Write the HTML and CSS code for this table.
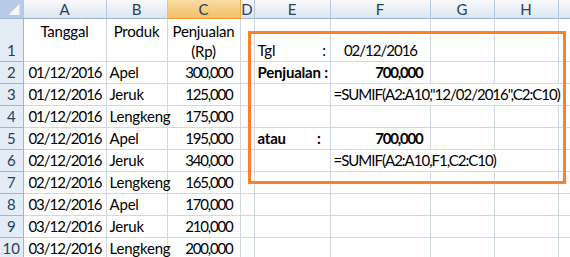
FILE: index.html
```html
<!DOCTYPE html>
<html lang="id">
<head>
    <meta charset="UTF-8">
    <meta name="viewport" content="width=device-width, initial-scale=1.0">
    <title>SUMIF per tanggal</title>
    <link rel="stylesheet" href="styles.css">
</head>
<body>
    <div class="sheet">
        <table class="grid">
            <colgroup>
                <col class="c-rowhead">
                <col class="c-a">
                <col class="c-b">
                <col class="c-c">
                <col class="c-d">
                <col class="c-e">
                <col class="c-f">
                <col class="c-g">
                <col class="c-h">
                <col class="c-i">
            </colgroup>
            <thead>
                <tr>
                    <th class="corner"><span class="corner-mark"></span></th>
                    <th>A</th>
                    <th>B</th>
                    <th class="selected">C</th>
                    <th>D</th>
                    <th>E</th>
                    <th>F</th>
                    <th>G</th>
                    <th>H</th>
                    <th></th>
                </tr>
            </thead>
            <tbody>
                <tr class="tall">
                    <th>1</th>
                    <td class="title">Tanggal</td>
                    <td class="title">Produk</td>
                    <td class="title">Penjualan<br>(Rp)</td>
                    <td></td>
                    <td><span class="label">Tgl</span><span class="colon tgl">:</span></td>
                    <td class="mid">02/12/2016</td>
                    <td></td>
                    <td></td>
                    <td></td>
                </tr>
                <tr>
                    <th>2</th>
                    <td class="mid">01/12/2016</td>
                    <td>Apel</td>
                    <td class="num">300,000</td>
                    <td></td>
                    <td class="bold">Penjualan :</td>
                    <td class="num bold">700,000</td>
                    <td></td>
                    <td></td>
                    <td></td>
                </tr>
                <tr>
                    <th>3</th>
                    <td class="mid">01/12/2016</td>
                    <td>Jeruk</td>
                    <td class="num">125,000</td>
                    <td></td>
                    <td></td>
                    <td class="formula" colspan="4">=SUMIF(A2:A10,"12/02/2016",C2:C10)</td>
                </tr>
                <tr>
                    <th>4</th>
                    <td class="mid">01/12/2016</td>
                    <td>Lengkeng</td>
                    <td class="num">175,000</td>
                    <td></td>
                    <td></td>
                    <td></td>
                    <td></td>
                    <td></td>
                    <td></td>
                </tr>
                <tr>
                    <th>5</th>
                    <td class="mid">02/12/2016</td>
                    <td>Apel</td>
                    <td class="num">195,000</td>
                    <td></td>
                    <td class="bold"><span class="label">atau</span><span class="colon atau">:</span></td>
                    <td class="num bold">700,000</td>
                    <td></td>
                    <td></td>
                    <td></td>
                </tr>
                <tr>
                    <th>6</th>
                    <td class="mid">02/12/2016</td>
                    <td>Jeruk</td>
                    <td class="num">340,000</td>
                    <td></td>
                    <td></td>
                    <td class="formula" colspan="3">=SUMIF(A2:A10,F1,C2:C10)</td>
                    <td></td>
                </tr>
                <tr>
                    <th>7</th>
                    <td class="mid">02/12/2016</td>
                    <td>Lengkeng</td>
                    <td class="num">165,000</td>
                    <td></td><td></td><td></td><td></td><td></td><td></td>
                </tr>
                <tr>
                    <th>8</th>
                    <td class="mid">03/12/2016</td>
                    <td>Apel</td>
                    <td class="num">170,000</td>
                    <td></td><td></td><td></td><td></td><td></td><td></td>
                </tr>
                <tr>
                    <th>9</th>
                    <td class="mid">03/12/2016</td>
                    <td>Jeruk</td>
                    <td class="num">210,000</td>
                    <td></td><td></td><td></td><td></td><td></td><td></td>
                </tr>
                <tr>
                    <th>10</th>
                    <td class="mid">03/12/2016</td>
                    <td>Lengkeng</td>
                    <td class="num">200,000</td>
                    <td></td><td></td><td></td><td></td><td></td><td></td>
                </tr>
            </tbody>
        </table>
        <!-- highlight box around the SUMIF example -->
        <div class="callout"></div>
    </div>
</body>
</html>
```

FILE: styles.css
```css
body {
    margin: 0;
    background: #fff;
    font-family: Lato, "Liberation Sans", sans-serif;
    font-size: 15px;
    color: #000;
}
.sheet {
    position: relative;
    width: 570px;
    height: 257px;
    overflow: hidden;
}
.grid {
    border-collapse: collapse;
    table-layout: fixed;
    width: 570px;
}
.c-rowhead { width: 23px; }
.c-a { width: 83px; }
.c-b { width: 61px; }
.c-c { width: 73px; }
.c-d { width: 14px; }
.c-e { width: 76px; }
.c-f { width: 100px; }
.c-g { width: 64px; }
.c-h { width: 64px; }
.c-i { width: 12px; }

/* column letters */
.grid thead th {
    height: 18px;
    padding: 0;
    font-weight: normal;
    color: #27415f;
    background: linear-gradient(#f8fafd, #dde5f0);
    border: 1px solid #b8c8dc;
    border-top: none;
    border-bottom-color: #9eb6ce;
    line-height: 18px;
}
.grid thead th.selected {
    background: linear-gradient(#f9dca4, #f2c063);
    border-color: #f0a74a;
    border-bottom-color: #f29536;
}
.grid thead th.corner {
    position: relative;
    background: #b7cbe6;
    border-left: none;
}
.corner-mark {
    position: absolute;
    right: 3px;
    bottom: 3px;
    width: 11px;
    height: 11px;
    background: #f4f7fb;
    clip-path: polygon(100% 0, 100% 100%, 0 100%);
}

/* row numbers */
.grid tbody th {
    padding: 0 0 2px;
    font-weight: normal;
    color: #27415f;
    background: #e4ecf7;
    border: 1px solid #9eb6ce;
    border-left: none;
    vertical-align: bottom;
    line-height: 18px;
}

.grid td {
    height: 19px;
    padding: 0 0 2px 3px;
    border: 1px solid #d0d7e5;
    vertical-align: bottom;
    white-space: nowrap;
    line-height: 18px;
    letter-spacing: -0.2px;
}
.grid tr.tall td,
.grid tr.tall th {
    height: 37px;
}
.grid td.title {
    vertical-align: top;
    text-align: center;
    padding: 2px 0 0;
    line-height: 20px;
}
.grid td.mid {
    text-align: center;
    padding-left: 1px;
    letter-spacing: -1px;
}
.grid td.num {
    text-align: right;
    padding-right: 7px;
    letter-spacing: -1.2px;
}
.bold {
    font-weight: bold;
}
.grid td.formula {
    letter-spacing: -1px;
}
.colon.tgl {
    margin-left: 47px;
}
.colon.atau {
    margin-left: 31px;
}

.callout {
    position: absolute;
    left: 248px;
    top: 31px;
    width: 318px;
    height: 153px;
    box-sizing: border-box;
    border: 3px solid #fa8128;
}
```
